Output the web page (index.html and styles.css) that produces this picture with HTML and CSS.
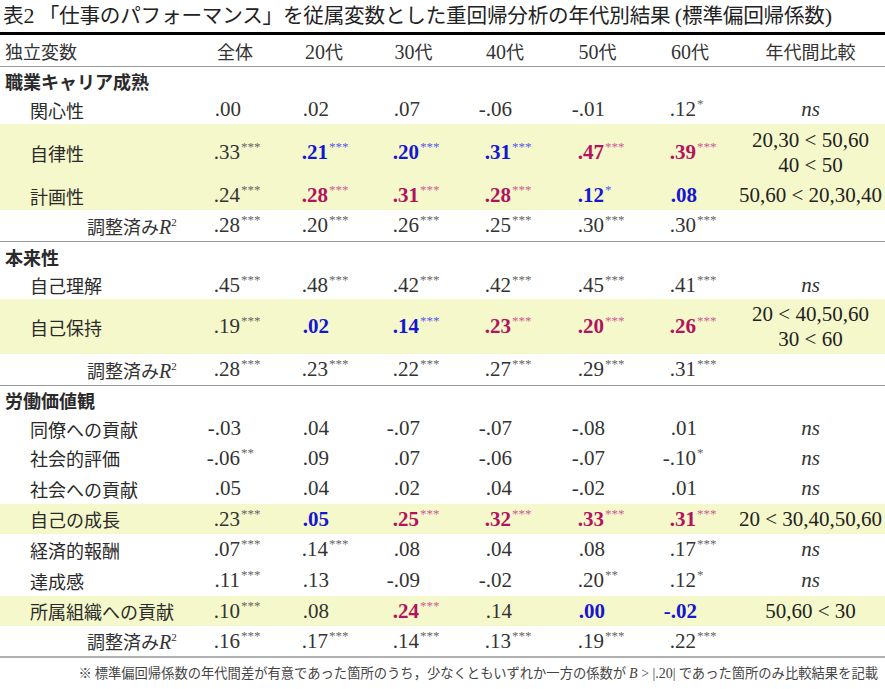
FILE: index.html
```html
<!DOCTYPE html>
<html lang="ja">
<head>
<meta charset="utf-8">
<link rel="stylesheet" href="styles.css">
</head>
<body>
<div class="title">表<span class="lat">2</span> 「仕事のパフォーマンス」を従属変数とした重回帰分析の年代別結果 <span class="lat">(</span>標準偏回帰係数<span class="lat">)</span></div>
<table class="tbl">
<colgroup>
<col class="c0"><col class="c1"><col class="c2"><col class="c3"><col class="c4"><col class="c5"><col class="c6"><col class="c7">
</colgroup>
<thead>
<tr class="head">
<th class="lab">独立変数</th><th>全体</th><th><span class="lat">20</span>代</th><th><span class="lat">30</span>代</th><th><span class="lat">40</span>代</th><th><span class="lat">50</span>代</th><th><span class="lat">60</span>代</th><th>年代間比較</th>
</tr>
</thead>
<tbody>
<tr class="sec h28"><td class="lab" colspan="8">職業キャリア成熟</td></tr>
<tr class="h29"><td class="item">関心性</td>
<td class="n"><span class="v">.00</span></td>
<td class="n"><span class="v">.02</span></td>
<td class="n"><span class="v">.07</span></td>
<td class="n"><span class="v">-.06</span></td>
<td class="n"><span class="v">-.01</span></td>
<td class="n"><span class="v">.12</span><span class="s">*</span></td>
<td class="cmp"><i>ns</i></td></tr>
<tr class="hl h57"><td class="item">自律性</td>
<td class="n"><span class="v">.33</span><span class="s">***</span></td>
<td class="n b"><span class="v">.21</span><span class="s">***</span></td>
<td class="n b"><span class="v">.20</span><span class="s">***</span></td>
<td class="n b"><span class="v">.31</span><span class="s">***</span></td>
<td class="n m"><span class="v">.47</span><span class="s">***</span></td>
<td class="n m"><span class="v">.39</span><span class="s">***</span></td>
<td class="cmp two">20,30 &lt; 50,60<br>40 &lt; 50</td></tr>
<tr class="hl h29"><td class="item">計画性</td>
<td class="n"><span class="v">.24</span><span class="s">***</span></td>
<td class="n m"><span class="v">.28</span><span class="s">***</span></td>
<td class="n m"><span class="v">.31</span><span class="s">***</span></td>
<td class="n m"><span class="v">.28</span><span class="s">***</span></td>
<td class="n b"><span class="v">.12</span><span class="s">*</span></td>
<td class="n b"><span class="v">.08</span></td>
<td class="cmp">50,60 &lt; 20,30,40</td></tr>
<tr class="end h31"><td class="adj">調整済み<i class="lat">R</i><sup class="lat">2</sup></td>
<td class="n"><span class="v">.28</span><span class="s">***</span></td>
<td class="n"><span class="v">.20</span><span class="s">***</span></td>
<td class="n"><span class="v">.26</span><span class="s">***</span></td>
<td class="n"><span class="v">.25</span><span class="s">***</span></td>
<td class="n"><span class="v">.30</span><span class="s">***</span></td>
<td class="n"><span class="v">.30</span><span class="s">***</span></td>
<td class="cmp"></td></tr>

<tr class="sec h29"><td class="lab" colspan="8">本来性</td></tr>
<tr class="h28"><td class="item">自己理解</td>
<td class="n"><span class="v">.45</span><span class="s">***</span></td>
<td class="n"><span class="v">.48</span><span class="s">***</span></td>
<td class="n"><span class="v">.42</span><span class="s">***</span></td>
<td class="n"><span class="v">.42</span><span class="s">***</span></td>
<td class="n"><span class="v">.45</span><span class="s">***</span></td>
<td class="n"><span class="v">.41</span><span class="s">***</span></td>
<td class="cmp"><i>ns</i></td></tr>
<tr class="hl h55"><td class="item">自己保持</td>
<td class="n"><span class="v">.19</span><span class="s">***</span></td>
<td class="n b"><span class="v">.02</span></td>
<td class="n b"><span class="v">.14</span><span class="s">***</span></td>
<td class="n m"><span class="v">.23</span><span class="s">***</span></td>
<td class="n m"><span class="v">.20</span><span class="s">***</span></td>
<td class="n m"><span class="v">.26</span><span class="s">***</span></td>
<td class="cmp two">20 &lt; 40,50,60<br>30 &lt; 60</td></tr>
<tr class="end h31"><td class="adj">調整済み<i class="lat">R</i><sup class="lat">2</sup></td>
<td class="n"><span class="v">.28</span><span class="s">***</span></td>
<td class="n"><span class="v">.23</span><span class="s">***</span></td>
<td class="n"><span class="v">.22</span><span class="s">***</span></td>
<td class="n"><span class="v">.27</span><span class="s">***</span></td>
<td class="n"><span class="v">.29</span><span class="s">***</span></td>
<td class="n"><span class="v">.31</span><span class="s">***</span></td>
<td class="cmp"></td></tr>

<tr class="sec h28"><td class="lab" colspan="8">労働価値観</td></tr>
<tr class="h29"><td class="item">同僚への貢献</td>
<td class="n"><span class="v">-.03</span></td>
<td class="n"><span class="v">.04</span></td>
<td class="n"><span class="v">-.07</span></td>
<td class="n"><span class="v">-.07</span></td>
<td class="n"><span class="v">-.08</span></td>
<td class="n"><span class="v">.01</span></td>
<td class="cmp"><i>ns</i></td></tr>
<tr class="h30"><td class="item">社会的評価</td>
<td class="n"><span class="v">-.06</span><span class="s">**</span></td>
<td class="n"><span class="v">.09</span></td>
<td class="n"><span class="v">.07</span></td>
<td class="n"><span class="v">-.06</span></td>
<td class="n"><span class="v">-.07</span></td>
<td class="n"><span class="v">-.10</span><span class="s">*</span></td>
<td class="cmp"><i>ns</i></td></tr>
<tr class="h31"><td class="item">社会への貢献</td>
<td class="n"><span class="v">.05</span></td>
<td class="n"><span class="v">.04</span></td>
<td class="n"><span class="v">.02</span></td>
<td class="n"><span class="v">.04</span></td>
<td class="n"><span class="v">-.02</span></td>
<td class="n"><span class="v">.01</span></td>
<td class="cmp"><i>ns</i></td></tr>
<tr class="hl h30"><td class="item">自己の成長</td>
<td class="n"><span class="v">.23</span><span class="s">***</span></td>
<td class="n b"><span class="v">.05</span></td>
<td class="n m"><span class="v">.25</span><span class="s">***</span></td>
<td class="n m"><span class="v">.32</span><span class="s">***</span></td>
<td class="n m"><span class="v">.33</span><span class="s">***</span></td>
<td class="n m"><span class="v">.31</span><span class="s">***</span></td>
<td class="cmp">20 &lt; 30,40,50,60</td></tr>
<tr class="h31"><td class="item">経済的報酬</td>
<td class="n"><span class="v">.07</span><span class="s">***</span></td>
<td class="n"><span class="v">.14</span><span class="s">***</span></td>
<td class="n"><span class="v">.08</span></td>
<td class="n"><span class="v">.04</span></td>
<td class="n"><span class="v">.08</span></td>
<td class="n"><span class="v">.17</span><span class="s">***</span></td>
<td class="cmp"><i>ns</i></td></tr>
<tr class="h31"><td class="item">達成感</td>
<td class="n"><span class="v">.11</span><span class="s">***</span></td>
<td class="n"><span class="v">.13</span></td>
<td class="n"><span class="v">-.09</span></td>
<td class="n"><span class="v">-.02</span></td>
<td class="n"><span class="v">.20</span><span class="s">**</span></td>
<td class="n"><span class="v">.12</span><span class="s">*</span></td>
<td class="cmp"><i>ns</i></td></tr>
<tr class="hl h30"><td class="item">所属組織への貢献</td>
<td class="n"><span class="v">.10</span><span class="s">***</span></td>
<td class="n"><span class="v">.08</span></td>
<td class="n m"><span class="v">.24</span><span class="s">***</span></td>
<td class="n"><span class="v">.14</span></td>
<td class="n b"><span class="v">.00</span></td>
<td class="n b"><span class="v">-.02</span></td>
<td class="cmp">50,60 &lt; 30</td></tr>
<tr class="last h30"><td class="adj">調整済み<i class="lat">R</i><sup class="lat">2</sup></td>
<td class="n"><span class="v">.16</span><span class="s">***</span></td>
<td class="n"><span class="v">.17</span><span class="s">***</span></td>
<td class="n"><span class="v">.14</span><span class="s">***</span></td>
<td class="n"><span class="v">.13</span><span class="s">***</span></td>
<td class="n"><span class="v">.19</span><span class="s">***</span></td>
<td class="n"><span class="v">.22</span><span class="s">***</span></td>
<td class="cmp"></td></tr>
</tbody>
</table>
<p class="note">※ 標準偏回帰係数の年代間差が有意であった箇所のうち，少なくともいずれか一方の係数が <span class="lat"><i>B</i> &gt; |.20|</span> であった箇所のみ比較結果を記載</p>
</body>
</html>
```

FILE: styles.css
```css
html, body {
  margin: 0;
  padding: 0;
  background: #ffffff;
}
body {
  width: 885px;
  font-family: "Noto Sans CJK JP", "Noto Sans", sans-serif;
  color: #2a2a2a;
}
.lat {
  font-family: "Liberation Serif", "Times New Roman", serif;
}
.title {
  height: 32px;
  line-height: 29px;
  font-size: 20.6px;
  padding-left: 3px;
  border-bottom: 3px solid #000;
  white-space: nowrap;
  letter-spacing: -0.2px;
  color: #222;
}
.title .lat {
  font-size: 22px;
}
.tbl {
  width: 885px;
  border-collapse: collapse;
  table-layout: fixed;
}
.c0 { width: 190px; }
.c1 { width: 90px; }
.c2 { width: 88px; }
.c3 { width: 91px; }
.c4 { width: 92px; }
.c5 { width: 93px; }
.c6 { width: 92px; }
.c7 { width: 149px; }

th, td {
  padding: 0;
  vertical-align: middle;
  white-space: nowrap;
}
.head th {
  height: 31px;
  font-size: 18px;
  font-weight: normal;
  text-align: center;
  color: #333;
  border-bottom: 1px solid #9a9a9a;
}
.head th .lat {
  font-size: 20px;
}
.head th.lab {
  text-align: left;
  padding-left: 5px;
}
.sec td.lab {
  font-size: 18px;
  font-weight: 700;
  padding-left: 5px;
  color: #2a2a2a;
}
.h28 td { height: 28px; }
.h29 td { height: 29px; }
.h30 td { height: 30px; }
.h31 td { height: 31px; }
.h55 td { height: 55px; }
.h57 td { height: 57px; }

.item {
  font-size: 18px;
  padding-left: 30px;
  color: #2a2a2a;
}
.adj {
  font-size: 18px;
  padding-left: 87px;
  color: #333;
}
.adj i {
  font-size: 20px;
}
.adj sup {
  font-size: 11px;
  vertical-align: 8px;
  line-height: 0;
}
.hl td {
  background: #f5f8cb;
}
.end td {
  border-bottom: 1px solid #9a9a9a;
}
.last td {
  border-bottom: 2px solid #b0b0b0;
}

.n {
  text-align: right;
  padding-right: 39px;
  font-family: "Liberation Serif", "Times New Roman", serif;
  font-size: 21px;
  color: #333;
}
.n .s {
  display: inline-block;
  width: 0;
  text-align: left;
  font-size: 13px;
  vertical-align: 8px;
  line-height: 1;
  color: #666;
  padding-left: 1px;
}
.n.b .v {
  color: #1616d0;
  font-weight: 700;
}
.n.b .s {
  color: #5858ee;
}
.n.m .v {
  color: #b3125f;
  font-weight: 700;
}
.n.m .s {
  color: #d25a96;
}
.cmp {
  text-align: center;
  font-family: "Liberation Serif", "Times New Roman", serif;
  font-size: 21px;
  color: #222;
}
.cmp i {
  color: #333;
}
.cmp.two {
  line-height: 25px;
}
.note {
  margin: 0;
  height: 29px;
  line-height: 29px;
  text-align: right;
  padding-right: 7px;
  font-size: 13.3px;
  color: #444;
  white-space: nowrap;
}
.note .lat {
  font-size: 14px;
}
```
